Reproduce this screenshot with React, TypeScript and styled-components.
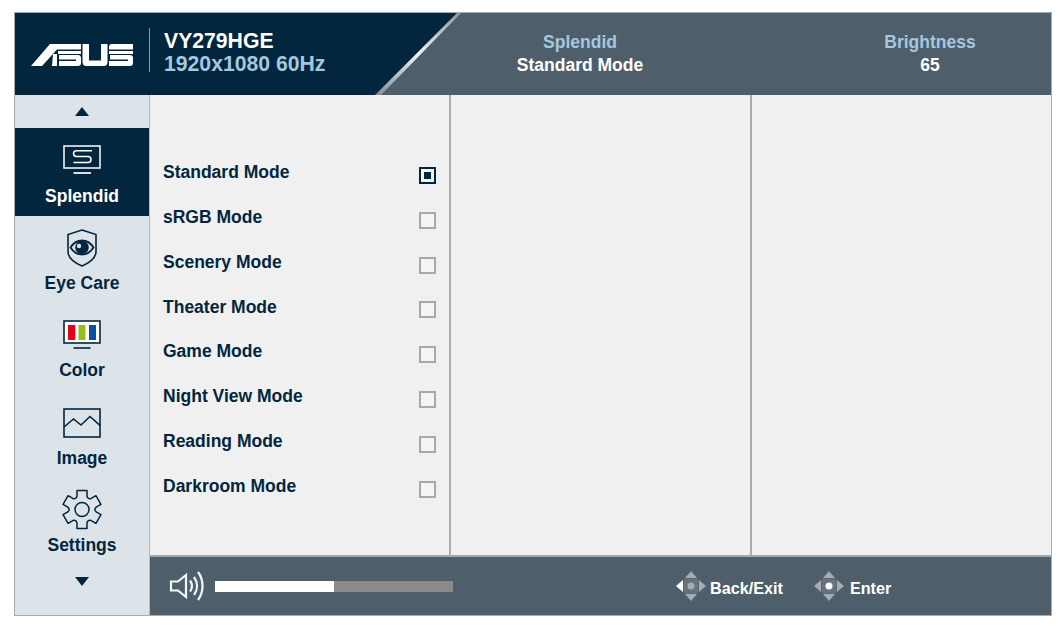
import React from "react";
import styled, { createGlobalStyle } from "styled-components";

const modes = [
  "Standard Mode",
  "sRGB Mode",
  "Scenery Mode",
  "Theater Mode",
  "Game Mode",
  "Night View Mode",
  "Reading Mode",
  "Darkroom Mode",
];

// six flat teeth with a curved valley between each pair
const gearPath = () => {
  const pt = (x: number, y: number, deg: number) => {
    const r = (deg * Math.PI) / 180;
    const px = 20 + x * Math.cos(r) + y * Math.sin(r);
    const py = 20.5 + x * Math.sin(r) - y * Math.cos(r);
    return `${px.toFixed(2)} ${py.toFixed(2)}`;
  };
  let d = "";
  for (let k = 0; k < 6; k++) {
    const a = k * 60;
    d += `${k === 0 ? "M" : "L"}${pt(-5, 13.5, a)} L${pt(-5, 19, a)} L${pt(5, 19, a)} L${pt(5, 13.5, a)} `;
    d += `Q${pt(0, 11.5, a + 30)} ${pt(-5, 13.5, a + 60)} `;
  }
  return d + "Z";
};

const AsusLogo = () => (
  <svg width="102" height="22" viewBox="0 0 102 22">
    <g fill="#fff">
      <path d="M0 22L19 0H50V5.500H26L11 22z" />
      <polygon points="22,10 26,10 26,22 21,22" />
      <path d="M27 7H50V10H27z" />
      <path d="M28 11H47Q50 11 50 14V19Q50 22 47 22H28V17H45V15.500H28z" />
      <path d="M51.500 0H58V16.500H70V0H76.500V18Q76.500 22 72.500 22H55.500Q51.500 22 51.500 18z" />
      <path d="M81 0H102V5.500H78V3Q78 0 81 0z" />
      <path d="M78 7H102V10H78z" />
      <path d="M79 11H99Q102 11 102 14V19Q102 22 99 22H78V17H97V15.500H79z" />
    </g>
  </svg>
);

const SplendidIcon = () => (
  <svg width="38" height="30" viewBox="0 0 38 30" fill="none" stroke="currentColor" strokeWidth="1.500">
    <rect x="1" y="1" width="36" height="22" />
    <path d="M10.500 28h17.500" strokeWidth="1.700" />
    <path d="M29 5.700H13.500c-2 0-3 1-3 2.900s1 2.900 3 2.900h11.500c2 0 3 1 3 2.900s-1 3-3 3H10.500" />
  </svg>
);

const EyeCareIcon = () => (
  <svg width="32" height="38" viewBox="0 0 32 38" fill="none" stroke="currentColor" strokeWidth="1.600">
    <path d="M16 1l14 4.500v17c0 7-7 11.500-14 14.500C9 34 2 29.500 2 22.500v-17z" />
    <path d="M4.500 18.500C8 13 12 11.500 16 11.500s8 1.500 11.500 7c-3.500 5.500-7.500 7-11.500 7s-8-1.500-11.500-7z" strokeWidth="1.800" />
    <circle cx="16" cy="18.500" r="6" fill="currentColor" />
    <circle cx="13" cy="17" r="2.200" fill="#dde4e9" stroke="none" />
  </svg>
);

const ColorIcon = () => (
  <svg width="38" height="30" viewBox="0 0 38 30" fill="none">
    <rect x="1" y="1" width="36" height="22" fill="#fff" stroke="#03263f" strokeWidth="1.600" />
    <rect x="5" y="5" width="7.300" height="15" fill="#e2001a" />
    <rect x="15.500" y="5" width="7" height="15" fill="#93c01f" />
    <rect x="26" y="5" width="7" height="15" fill="#0a50a1" />
    <path d="M10.500 28h17" stroke="#03263f" strokeWidth="1.600" />
  </svg>
);

const ImageIcon = () => (
  <svg width="38" height="30" viewBox="0 0 38 30" fill="none" stroke="currentColor" strokeWidth="1.600">
    <rect x="1" y="1" width="36" height="28" />
    <path d="M1 19l9.500-8 7.500 6 9-8.500 10.500 9.500" />
  </svg>
);

const SettingsIcon = () => (
  <svg width="40" height="41" viewBox="0 0 40 41" fill="none" stroke="currentColor" strokeWidth="1.500" strokeLinejoin="round">
    <circle cx="20" cy="20.500" r="7" />
    <path d={gearPath()} />
  </svg>
);

const SpeakerIcon = () => (
  <svg width="36" height="32" viewBox="0 0 36 32" fill="none" stroke="#f2f7fa" strokeWidth="2.200">
    <path d="M2 11.500h7L17 5v22l-8-6.500H2z" />
    <path d="M21 10.500c2.500 3.500 2.500 7.500 0 11" />
    <path d="M25 7c4 5.500 4 12.500 0 18" />
    <path d="M29 2c6 8 6 20 0 28" />
  </svg>
);

// the pad has one highlighted part: the left arrow for back, the centre for enter
const PadIcon = ({ active }: { active: "left" | "center" }) => (
  <svg width="30" height="30" viewBox="0 0 30 30">
    <rect x="7.500" y="7.500" width="15" height="15" rx="3" fill="#66727c" />
    <polygon points="15,0 21,7 9,7" fill="#a5abaf" />
    <polygon points="15,30 21,23 9,23" fill="#a5abaf" />
    <polygon points="0,15 7,9 7,21" fill={active === "left" ? "#fff" : "#a5abaf"} />
    <polygon points="30,15 23,9 23,21" fill="#a5abaf" />
    <circle cx="15" cy="15" r="3.500" fill={active === "center" ? "#fff" : "#a5abaf"} />
  </svg>
);

export default function App() {
  return (
    <>
      <GlobalStyle />
      <Page>
        <Frame>
          <Header>
            <Brand>
              <LogoSlot>
                <AsusLogo />
              </LogoSlot>
              <Divider />
              <Model>
                <ModelName>VY279HGE</ModelName>
                <ModelSpec>1920x1080 60Hz</ModelSpec>
              </Model>
            </Brand>
            <Slash viewBox="0 0 86 82" preserveAspectRatio="none">
              <defs>
                <linearGradient id="slash" x1="0" y1="1" x2="1" y2="0">
                  <stop offset="0" stopColor="#7d8a94" />
                  <stop offset="0.5" stopColor="#f0f2f3" />
                  <stop offset="1" stopColor="#8d979f" />
                </linearGradient>
              </defs>
              <polygon points="0,82 82,0 86,0 6,82" fill="url(#slash)" />
            </Slash>
            <Status>
              <StatusItem>
                <StatusLabel>Splendid</StatusLabel>
                <StatusValue>Standard Mode</StatusValue>
              </StatusItem>
              <StatusItem $offset={110}>
                <StatusLabel>Brightness</StatusLabel>
                <StatusValue>65</StatusValue>
              </StatusItem>
            </Status>
          </Header>
          <Body>
            <Sidebar>
              <Arrow $up />
              <MenuItem $active>
                <IconSlot>
                  <SplendidIcon />
                </IconSlot>
                <MenuLabel $active>Splendid</MenuLabel>
              </MenuItem>
              <MenuItem>
                <IconSlot>
                  <EyeCareIcon />
                </IconSlot>
                <MenuLabel>Eye Care</MenuLabel>
              </MenuItem>
              <MenuItem>
                <IconSlot>
                  <ColorIcon />
                </IconSlot>
                <MenuLabel>Color</MenuLabel>
              </MenuItem>
              <MenuItem>
                <IconSlot>
                  <ImageIcon />
                </IconSlot>
                <MenuLabel>Image</MenuLabel>
              </MenuItem>
              <MenuItem>
                <IconSlot>
                  <SettingsIcon />
                </IconSlot>
                <MenuLabel>Settings</MenuLabel>
              </MenuItem>
              <Arrow />
            </Sidebar>
            <Main>
              <Columns>
                <OptionColumn>
                  {modes.map((mode, i) => (
                    <OptionRow key={mode}>
                      <OptionLabel>{mode}</OptionLabel>
                      <CheckBox $checked={i === 0} />
                    </OptionRow>
                  ))}
                </OptionColumn>
                <EmptyColumn />
                <EmptyColumn />
              </Columns>
              <Footer>
                <Volume>
                  <SpeakerIcon />
                  <VolumeTrack>
                    <VolumeFill style={{ width: "50%" }} />
                  </VolumeTrack>
                </Volume>
                <Hints>
                  <Hint $gap={4}>
                    <PadIcon active="left" />
                    <HintLabel>Back/Exit</HintLabel>
                  </Hint>
                  <Hint $gap={6}>
                    <PadIcon active="center" />
                    <HintLabel>Enter</HintLabel>
                  </Hint>
                </Hints>
              </Footer>
            </Main>
          </Body>
        </Frame>
      </Page>
    </>
  );
}

const GlobalStyle = createGlobalStyle`
  html, body {
    margin: 0;
    background: #fff;
    font-family: "Liberation Sans", Arial, sans-serif;
    font-weight: 700;
  }
`;

const Page = styled.div`
  width: 1060px;
  height: 628px;
  padding: 12px 0 0 14px;
  box-sizing: border-box;
`;

const Frame = styled.div`
  width: 1038px;
  height: 604px;
  box-sizing: border-box;
  border: 1px solid #a8acaf;
  display: flex;
  flex-direction: column;
`;

const Header = styled.header`
  position: relative;
  height: 82px;
  flex: none;
  display: flex;
  background: #4f5e6b;
`;

const Brand = styled.div`
  width: 445px;
  flex: none;
  display: flex;
  align-items: center;
  background: #03263f;
  clip-path: polygon(0 0, 100% 0, 362px 100%, 0 100%);
`;

const LogoSlot = styled.div`
  width: 134px;
  padding-left: 16px;
  padding-top: 1px;
  box-sizing: border-box;
  display: flex;
`;

const Divider = styled.div`
  width: 1px;
  height: 44px;
  margin-bottom: 8px;
  background: #8d9aa5;
`;

const Model = styled.div`
  margin-left: 14px;
  margin-bottom: 5px;
  display: flex;
  flex-direction: column;
`;

const ModelName = styled.div`
  font-size: 21.200px;
  line-height: 23px;
  color: #fff;
`;

const ModelSpec = styled.div`
  font-size: 21.200px;
  line-height: 23px;
  color: #a5c7df;
`;

const Slash = styled.svg`
  position: absolute;
  left: 360px;
  top: 0;
  width: 86px;
  height: 82px;
`;

const Status = styled.div`
  flex: 1;
  display: flex;
`;

const StatusItem = styled.div<{ $offset?: number }>`
  width: 240px;
  margin-left: ${(p) => p.$offset ?? 0}px;
  padding-bottom: 2px;
  display: flex;
  flex-direction: column;
  align-items: center;
  justify-content: center;
`;

const StatusLabel = styled.div`
  font-size: 17.500px;
  line-height: 23px;
  color: #a5c7df;
`;

const StatusValue = styled.div`
  font-size: 17.500px;
  line-height: 22px;
  color: #fff;
`;

const Body = styled.div`
  flex: 1;
  min-height: 0;
  display: flex;
`;

const Sidebar = styled.nav`
  width: 135px;
  flex: none;
  box-sizing: border-box;
  background: #dde4e9;
  border-right: 1px solid #b5bbc0;
  display: flex;
  flex-direction: column;
  align-items: stretch;
`;

const Arrow = styled.div<{ $up?: boolean }>`
  height: 33px;
  flex: none;
  display: flex;
  align-items: center;
  justify-content: center;
  &::before {
    content: "";
    border-left: 7px solid transparent;
    border-right: 7px solid transparent;
    ${(p) => (p.$up ? "border-bottom" : "border-top")}: 9px solid #03263f;
  }
`;

const MenuItem = styled.div<{ $active?: boolean }>`
  height: ${(p) => (p.$active ? 88 : 87.300)}px;
  flex: none;
  box-sizing: border-box;
  padding-top: 12px;
  display: flex;
  flex-direction: column;
  align-items: center;
  background: ${(p) => (p.$active ? "#03263f" : "transparent")};
  color: ${(p) => (p.$active ? "#fff" : "#03263f")};
`;

const IconSlot = styled.div`
  height: 40px;
  display: flex;
  align-items: center;
  justify-content: center;
`;

const MenuLabel = styled.div<{ $active?: boolean }>`
  margin-top: ${(p) => (p.$active ? 5 : 4)}px;
  font-size: 17.500px;
  line-height: 22px;
`;

const Main = styled.div`
  flex: 1;
  min-width: 0;
  display: flex;
  flex-direction: column;
`;

const Columns = styled.div`
  flex: 1;
  min-height: 0;
  display: flex;
  background: #f0f0f0;
`;

const OptionColumn = styled.div`
  width: 301px;
  flex: none;
  box-sizing: border-box;
  padding: 66.300px 13px 0 13px;
  border-right: 2px solid #a9adb0;
`;

const OptionRow = styled.div`
  height: 44.800px;
  display: flex;
  justify-content: space-between;
`;

const OptionLabel = styled.div`
  font-size: 17.500px;
  line-height: 22px;
  color: #03263f;
`;

const CheckBox = styled.div<{ $checked?: boolean }>`
  width: 17px;
  height: 17px;
  margin-top: 5.700px;
  box-sizing: border-box;
  border: 2px solid ${(p) => (p.$checked ? "#03263f" : "#a6a9ab")};
  background: #f3f4f4;
  display: flex;
  align-items: center;
  justify-content: center;
  &::after {
    content: "";
    display: ${(p) => (p.$checked ? "block" : "none")};
    width: 7px;
    height: 7px;
    background: #03263f;
  }
`;

const EmptyColumn = styled.div`
  width: 301px;
  flex: none;
  box-sizing: border-box;
  border-right: 2px solid #a9adb0;
  &:last-child {
    flex: 1;
    border-right: 0;
  }
`;

const Footer = styled.footer`
  height: 60px;
  flex: none;
  box-sizing: border-box;
  border-top: 2px solid #a2a8ad;
  background: #4f5e6b;
  display: flex;
  align-items: center;
`;

const Volume = styled.div`
  margin-left: 19px;
  display: flex;
  align-items: center;
  gap: 10px;
`;

const VolumeTrack = styled.div`
  width: 238px;
  height: 11px;
  background: #8a8a8a;
`;

const VolumeFill = styled.div`
  height: 100%;
  background: #fff;
`;

const Hints = styled.div`
  margin-left: 223px;
  display: flex;
  align-items: center;
  gap: 31px;
`;

const Hint = styled.div<{ $gap: number }>`
  display: flex;
  align-items: center;
  gap: ${(p) => p.$gap}px;
`;

const HintLabel = styled.div`
  font-size: 16.200px;
  color: #fff;
  padding-top: 4px;
`;
